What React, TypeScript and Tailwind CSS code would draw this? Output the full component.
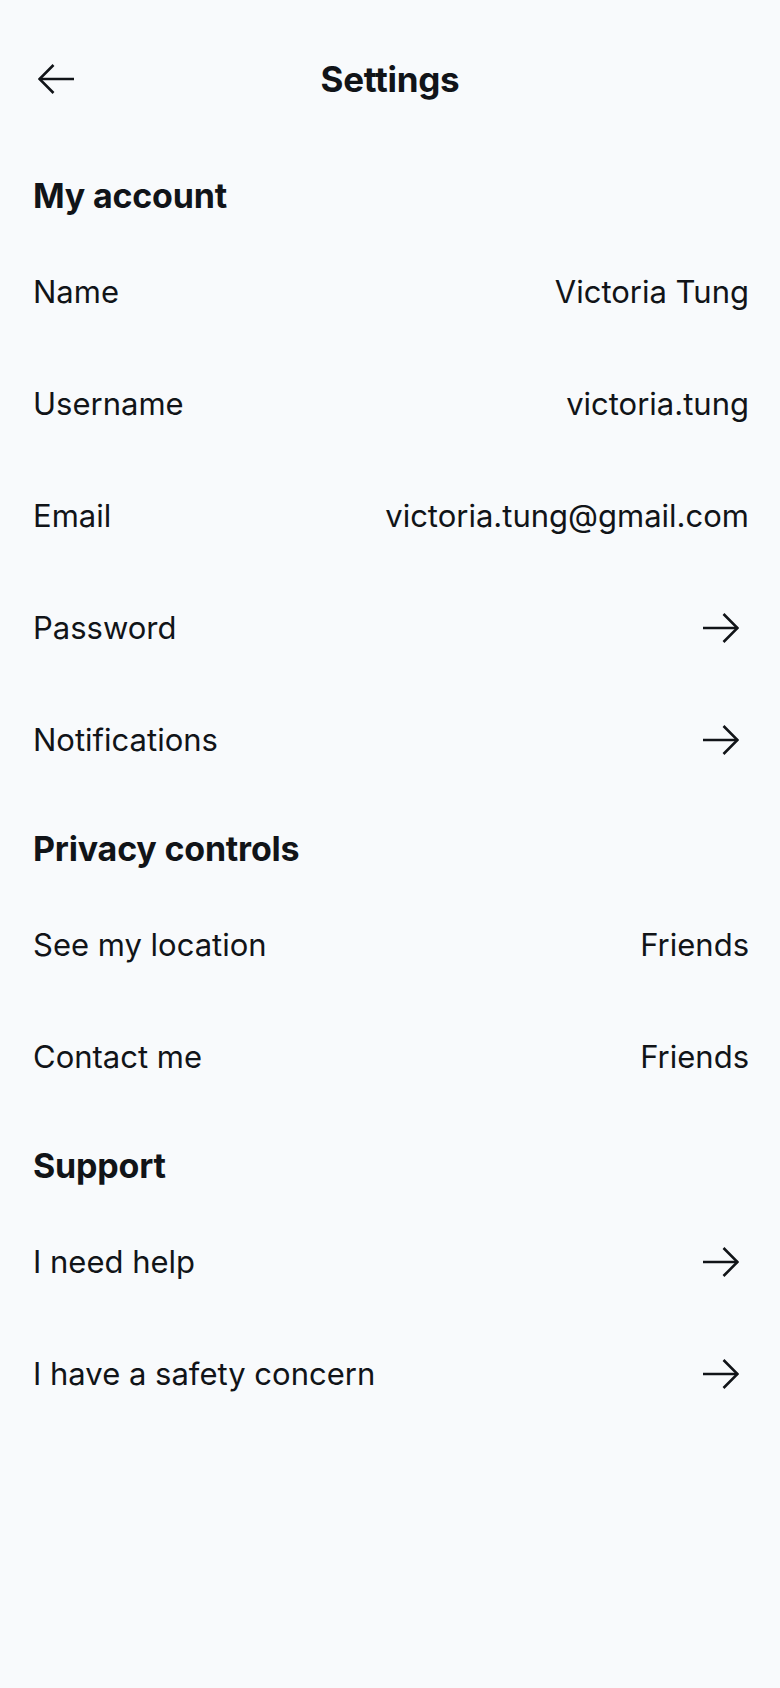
import React from "react";

function Arrow({ flip = false }: { flip?: boolean }) {
  return (
    <svg
      width="36"
      height="30"
      viewBox="0 0 36 30"
      fill="none"
      stroke="#111418"
      strokeWidth="2.6"
      className={flip ? "-scale-x-100" : ""}
    >
      <path d="M0 15 H34.5" />
      <path d="M20.5 1 L34.5 15 L20.5 29" strokeLinejoin="miter" />
    </svg>
  );
}

type Row = { label: string; value?: string; link?: boolean };

const sections: { title: string; rows: Row[] }[] = [
  {
    title: "My account",
    rows: [
      { label: "Name", value: "Victoria Tung" },
      { label: "Username", value: "victoria.tung" },
      { label: "Email", value: "victoria.tung@gmail.com" },
      { label: "Password", link: true },
      { label: "Notifications", link: true },
    ],
  },
  {
    title: "Privacy controls",
    rows: [
      { label: "See my location", value: "Friends" },
      { label: "Contact me", value: "Friends" },
    ],
  },
  {
    title: "Support",
    rows: [
      { label: "I need help", link: true },
      { label: "I have a safety concern", link: true },
    ],
  },
];

export default function App() {
  return (
    <div
      className="min-h-[1688px] w-full bg-[#f8fafc] text-[#111418]"
      style={{ fontFamily: "Inter, 'Noto Sans', sans-serif" }}
    >
      <header className="relative flex h-[158px] items-center justify-center px-[33px]">
        <button className="absolute left-[38px] top-[64px]">
          <Arrow flip />
        </button>
        <h1 className="text-[35px] font-bold leading-[40px] tracking-[-0.3px]">Settings</h1>
      </header>

      <main className="pl-[33px] pr-[31px]">
        {sections.map((s, i) => (
          <section key={s.title}>
            <h2
              className={
                (i === 0 ? "mt-[18px]" : "mt-[33px]") +
                " mb-[20px] text-[34px] font-bold leading-[40px] tracking-[-0.2px]"
              }
            >
              {s.title}
            </h2>
            {s.rows.map((r) => (
              <div
                key={r.label}
                className="flex h-[112px] items-center justify-between text-[31px]"
              >
                <span>{r.label}</span>
                {r.link ? (
                  <span className="pr-[10px]">
                    <Arrow />
                  </span>
                ) : (
                  <span>{r.value}</span>
                )}
              </div>
            ))}
          </section>
        ))}
      </main>
    </div>
  );
}
